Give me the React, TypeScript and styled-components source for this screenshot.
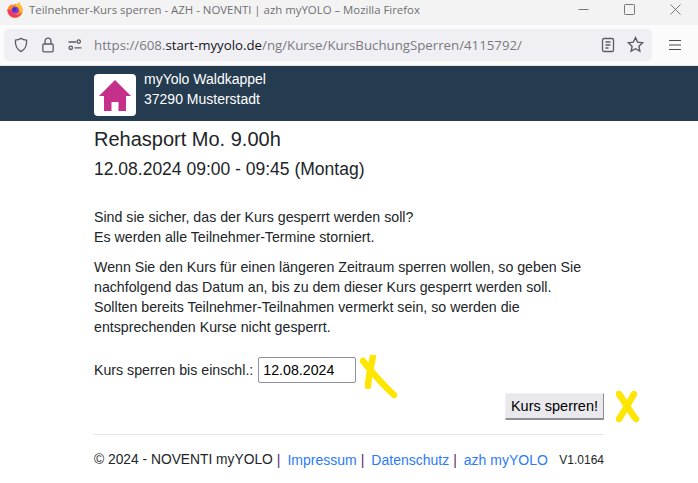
import * as React from "react";
import styled, { createGlobalStyle } from "styled-components";

function App(): JSX.Element {
  return (
    <Page>
      <GlobalStyle />
      <TitleBar>
        <FirefoxLogo viewBox="0 0 16 16">
          <path d="M4 2.600C1.800 4 .4 6.200.4 8.500a7.600 7.500 0 0 0 15.200 0c0-2-.7-3.800-2-5.200-.6-1-1-2-1.300-3.300-.6 1-1.200 1.600-2 2.200C8.600 1.800 7 2 6 3 5.400 3 4.600 2.900 4 2.600z" fill="#ff8a2a" />
          <path d="M12.300 0c.3 1.300.7 2.300 1.300 3.300 1.300 1.400 2 3.200 2 5.200 0 1-.2 1.800-.5 2.600L9 5.500 8 3c.8-.2 1.600-.4 2.300-.8.8-.6 1.400-1.200 2-2.200z" fill="#ffc02e" />
          <path d="M.4 7.500c0 4.800 3.400 8 7.600 8 3.400 0 6.200-2.100 7.100-4.900-1.700 2-3.900 2.500-6 2.100C6.300 12.100 4 10 4.400 7.600 3 8 1.500 7.900.4 7.500z" fill="#f5365f" />
          <circle cx="8.200" cy="8.200" r="3.600" fill="#8a3ccf" />
          <circle cx="7.500" cy="7.500" r="1.900" fill="#4a2fb0" />
        </FirefoxLogo>
        <WindowTitle>Teilnehmer-Kurs sperren - AZH - NOVENTI | azh myYOLO – Mozilla Firefox</WindowTitle>
        <WindowControls>
          <ChromeIcon viewBox="0 0 11 11">
            <path d="M0.500 5.500h10" />
          </ChromeIcon>
          <ChromeIcon viewBox="0 0 11 11">
            <rect x="0.500" y="0.500" width="10" height="10" rx="0.800" />
          </ChromeIcon>
          <ChromeIcon viewBox="0 0 11 11">
            <path d="M0.500 0.500l10 10M10.500 0.500l-10 10" />
          </ChromeIcon>
        </WindowControls>
      </TitleBar>
      <NavBar>
        <UrlBar>
          <UrlIcon viewBox="0 0 16 16">
            <path d="M8 1.400c1.800 1.100 3.600 1.600 5.600 1.700.3 5.200-1.400 9.300-5.600 11.500C3.800 12.400 2.100 8.300 2.400 3.100 4.400 3 6.200 2.500 8 1.400z" />
          </UrlIcon>
          <UrlIcon viewBox="0 0 16 16">
            <rect x="2.800" y="7" width="10.400" height="7.800" rx="1.400" />
            <path d="M5 7V4.200a3 3 0 0 1 6 0V7" />
          </UrlIcon>
          <UrlIcon viewBox="0 0 16 16">
            <circle cx="11.700" cy="4.600" r="1.700" />
            <circle cx="3.800" cy="10.800" r="1.700" />
            <path d="M1.500 5h7.500M7.500 10.800h7" />
          </UrlIcon>
          <UrlText>
            https://608.<UrlHost>start-myyolo.de</UrlHost>/ng/Kurse/KursBuchungSperren/4115792/
          </UrlText>
          <UrlIcon viewBox="0 0 16 16">
            <rect x="2.500" y="1.500" width="11" height="13" rx="1.600" />
            <path d="M5.500 5h5M5.500 8h5M5.500 11h3" />
          </UrlIcon>
          <StarIcon viewBox="0 0 16 16">
            <path d="M8 1.500l2 4.300 4.700.6-3.500 3.200.9 4.700L8 12l-4.100 2.300.9-4.700L1.300 6.400 6 5.800z" />
          </StarIcon>
        </UrlBar>
        <MenuIcon viewBox="0 0 12 12">
          <path d="M0 1.500h12M0 6h12M0 10.500h12" />
        </MenuIcon>
      </NavBar>
      <Header>
        <HeaderInner>
          <LogoBox>
            <svg viewBox="0 0 32 31" width="32" height="31">
              <path d="M16 0L32 16H27V31H19.500V22H12.500V31H5V16H0Z" fill="#c5308a" />
            </svg>
          </LogoBox>
          <Studio>
            <div>myYolo Waldkappel</div>
            <div>37290 Musterstadt</div>
          </Studio>
        </HeaderInner>
      </Header>
      <Main>
        <CourseTitle>Rehasport Mo. 9.00h</CourseTitle>
        <CourseDate>12.08.2024 09:00 - 09:45 (Montag)</CourseDate>
        <Question>
          Sind sie sicher, das der Kurs gesperrt werden soll?
          <br />
          Es werden alle Teilnehmer-Termine storniert.
        </Question>
        <Paragraph>
          Wenn Sie den Kurs für einen längeren Zeitraum sperren wollen, so geben Sie
          <br />
          nachfolgend das Datum an, bis zu dem dieser Kurs gesperrt werden soll.
          <br />
          Sollten bereits Teilnehmer-Teilnahmen vermerkt sein, so werden die
          <br />
          entsprechenden Kurse nicht gesperrt.
        </Paragraph>
        <DateRow>
          <span>Kurs sperren bis einschl.:</span>
          <DateInput defaultValue="12.08.2024" />
          <MarkBig viewBox="0 0 40 48">
            <path d="M4 6C9 12 18 24 35 40M14 1C12 12 9 24 9 31" />
          </MarkBig>
        </DateRow>
        <ButtonRow>
          <SubmitButton type="button">Kurs sperren!</SubmitButton>
          <MarkSmall viewBox="0 0 24 32">
            <path d="M3 3C8 10 15 22 20 28M18 3C13 12 8 20 3 28" />
          </MarkSmall>
        </ButtonRow>
        <Footer>
          <Copyright>© 2024 - NOVENTI myYOLO</Copyright>
          <Pipe>|</Pipe>
          <FooterLink href="#">Impressum</FooterLink>
          <Pipe>|</Pipe>
          <FooterLink href="#">Datenschutz</FooterLink>
          <Pipe>|</Pipe>
          <FooterLink href="#">azh myYOLO</FooterLink>
          <Version>V1.0164</Version>
        </Footer>
      </Main>
    </Page>
  );
}

const GlobalStyle = createGlobalStyle`
  html, body {
    margin: 0;
    background: #fff;
  }
  body {
    font-family: "Liberation Sans", Arial, sans-serif;
    color: #212529;
  }
  * {
    box-sizing: border-box;
  }
`;

const Page = styled.div`
  width: 698px;
  height: 483px;
  overflow: hidden;
`;

const TitleBar = styled.div`
  display: flex;
  align-items: center;
  height: 25px;
  padding: 0 0 6px 7px;
  background: #f3f3f4;
`;

const FirefoxLogo = styled.svg`
  width: 16px;
  height: 16px;
  margin-right: 6px;
  flex: none;
`;

const WindowTitle = styled.div`
  flex: 1;
  font-family: "Open Sans", sans-serif;
  font-size: 11.400px;
  color: #6f6f73;
  white-space: nowrap;
`;

const WindowControls = styled.div`
  display: flex;
  align-items: center;
  gap: 35px;
  padding-right: 17px;
`;

const ChromeIcon = styled.svg`
  width: 11px;
  height: 11px;
  fill: none;
  stroke: #77777a;
  stroke-width: 1;
`;

const NavBar = styled.div`
  display: flex;
  align-items: center;
  height: 41px;
  padding: 4px 0 5px 4px;
  background: #fbfbfc;
  border-bottom: 1px solid #e4e4e6;
`;

const UrlBar = styled.div`
  display: flex;
  align-items: center;
  width: 648px;
  height: 32px;
  padding: 0 8px 0 9px;
  border-radius: 5px;
  background: #f0f0f4;
`;

const UrlIcon = styled.svg`
  width: 16px;
  height: 16px;
  margin-right: 11px;
  flex: none;
  fill: none;
  stroke: #5b5b66;
  stroke-width: 1.300;
`;

const StarIcon = styled(UrlIcon)`
  width: 17px;
  height: 17px;
  margin-right: 0;
`;

const UrlText = styled.div`
  flex: 1;
  font-family: "Open Sans", sans-serif;
  font-size: 13.250px;
  color: #7a7a80;
  white-space: nowrap;
`;

const UrlHost = styled.span`
  color: #15141a;
`;

const MenuIcon = styled.svg`
  width: 12px;
  height: 12px;
  margin-left: 17px;
  fill: none;
  stroke: #4c4c54;
  stroke-width: 1.200;
`;

const Header = styled.header`
  height: 55px;
  padding: 8px 0 0 94px;
  background: #253c50;
`;

const HeaderInner = styled.div`
  display: flex;
  gap: 8px;
`;

const LogoBox = styled.div`
  display: flex;
  align-items: center;
  justify-content: center;
  width: 42px;
  height: 42px;
  border-radius: 4px;
  background: #fff;
`;

const Studio = styled.div`
  margin-top: -5px;
  font-size: 14px;
  line-height: 20px;
  color: #fff;
`;

const Main = styled.main`
  width: 510px;
  margin-left: 94px;
  font-size: 14.200px;
  line-height: 20px;
`;

const CourseTitle = styled.h1`
  margin: 6px 0 0;
  font-size: 20px;
  font-weight: 400;
  line-height: 24px;
`;

const CourseDate = styled.h2`
  margin: 8px 0 0;
  font-size: 17.500px;
  font-weight: 400;
  line-height: 21px;
`;

const Question = styled.p`
  margin: 27px 0 0;
`;

const Paragraph = styled.p`
  margin: 10px 0 0;
`;

const DateRow = styled.div`
  position: relative;
  display: flex;
  align-items: center;
  gap: 5px;
  margin-top: 20px;
`;

const DateInput = styled.input`
  width: 98px;
  height: 26px;
  padding: 0 4px;
  border: 1px solid #8f8f9d;
  border-radius: 2px;
  font-family: inherit;
  font-size: 14.200px;
  color: #000;
`;

const Mark = styled.svg`
  position: absolute;
  fill: none;
  stroke: #ffe600;
  stroke-width: 6.500;
  stroke-linecap: round;
  stroke-linejoin: round;
`;

const MarkBig = styled(Mark)`
  left: 265px;
  top: -2px;
  width: 40px;
  height: 48px;
`;

const MarkSmall = styled(Mark)`
  left: 522px;
  top: -2px;
  width: 24px;
  height: 32px;
`;

const ButtonRow = styled.div`
  position: relative;
  display: flex;
  justify-content: flex-end;
  margin-top: 10px;
`;

const SubmitButton = styled.button`
  height: 27px;
  padding: 0 5px;
  border: 1px solid;
  border-color: #f0f0f4 #8f8f93 #8f8f93 #f0f0f4;
  border-width: 1px 1px 2px 1px;
  background: #e9e9ed;
  font-family: inherit;
  font-size: 14.500px;
  color: #000;
`;

const Footer = styled.footer`
  display: flex;
  align-items: center;
  height: 50px;
  margin-top: 14px;
  border-top: 1px solid #e5e5e5;
  font-size: 14px;
`;

const Copyright = styled.span`
  font-size: 13.800px;
`;

const Pipe = styled.span`
  margin: 0 7px 0 4px;
  color: #5e2a6e;
`;

const FooterLink = styled.a`
  color: #2b7bf6;
  text-decoration: none;
`;

const Version = styled.span`
  margin-left: auto;
  font-size: 12px;
`;

export default App;
